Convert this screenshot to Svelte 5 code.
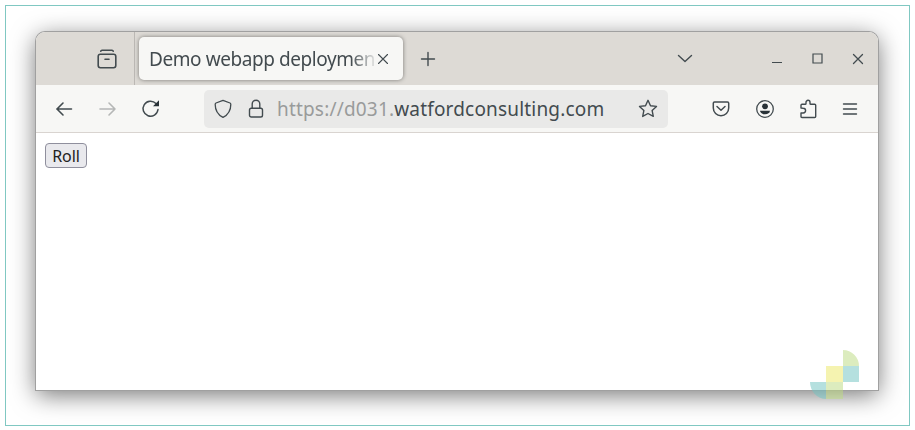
<script>
  const url = { prefix: 'https://d031.', domain: 'watfordconsulting.com' };
</script>

<main class="frame">
  <section class="window">
    <header class="tabs">
      <div class="history">
        <svg width="20" height="20" viewBox="0 0 20 20"><path d="M3.700 2.200Q4 1.200 5 1.200h10q1 0 1.300 1" stroke-width="1.500"/><rect x="1.200" y="5.200" width="17.600" height="13.600" rx="2.200" stroke-width="1.600"/><path d="M8 10.200h4" stroke-width="1.600"/></svg>
      </div>
      <div class="tab">
        <span class="title">Demo webapp deployment</span>
        <svg class="close-tab" width="12" height="12" viewBox="0 0 12 12"><path d="m1.500 1.500 9 9m0-9-9 9" stroke-width="1.100"/></svg>
      </div>
      <svg class="plus" width="16" height="16" viewBox="0 0 16 16"><path d="M8 1.500v13M1.500 8h13" stroke-width="1.400"/></svg>
      <svg class="chevron" width="16" height="10" viewBox="0 0 16 10"><path d="m1.500 1.500 6.500 6 6.500-6" stroke-width="1.400"/></svg>
      <svg class="minimize" width="12" height="12" viewBox="0 0 12 12"><path d="M1 9.500h10" stroke-width="1.200"/></svg>
      <svg class="maximize" width="11" height="11" viewBox="0 0 11 11"><path d="M1 1h9v9H1z" stroke-width="1.200"/></svg>
      <svg class="close" width="12" height="12" viewBox="0 0 12 12"><path d="m1.500 1.500 9 9m0-9-9 9" stroke-width="1.300"/></svg>
    </header>
    <nav class="toolbar">
      <svg class="back" width="18" height="16" viewBox="0 0 18 16"><path d="M16.500 8H1.800M8 2 2 8l6 6" stroke-width="1.600"/></svg>
      <svg class="forward" width="18" height="16" viewBox="0 0 18 16"><path d="M1 8h15m-6-6 6 6-6 6" stroke-width="1.600"/></svg>
      <svg class="reload" width="19" height="19" viewBox="0 0 19 19"><path d="M17 10.500a7.500 7.500 0 1 1-2-6" stroke-width="1.500"/><path class="solid" d="M18 1.200v6h-6z"/></svg>
      <div class="address">
        <svg width="18" height="20" viewBox="0 0 18 20"><path d="m9 1.300 7 2.700q.8.400.8 1.400c0 6-2.200 10-7.800 13C3.400 15.400 1.200 11.400 1.200 5.400q0-1 .8-1.400z" stroke-width="1.300"/></svg>
        <svg class="lock" width="16" height="20" viewBox="0 0 16 20"><rect x="1.500" y="9.200" width="13" height="8.800" rx="1.800" stroke-width="1.400"/><path d="M4.200 9V5a3.800 3.800 0 0 1 7.600 0v4" stroke-width="1.400"/></svg>
        <span class="url"><span>{url.prefix}</span>{url.domain}</span>
        <svg class="star" width="20" height="20" viewBox="0 0 20 20"><path d="m10 1.300 2.500 5.400 6 .7-4.400 4 1.200 6-5.300-2.900-5.300 2.900 1.200-6-4.400-4 6-.7z" stroke-width="1.400"/></svg>
      </div>
      <svg class="pocket" width="18" height="16" viewBox="0 0 18 16"><path d="M2.500 1h13q1.200 0 1.200 1.300V7A7.700 7.700 0 0 1 1.300 7V2.300Q1.300 1 2.500 1Z" stroke-width="1.500"/><path d="m5 5.500 4 3.700 4-3.700" stroke-width="1.500"/></svg>
      <svg class="account" width="20" height="20" viewBox="0 0 20 20"><circle cx="10" cy="10" r="8.300" stroke-width="1.300"/><circle class="solid" cx="10" cy="7.300" r="2.900"/><path class="solid" d="M5 11.800h10q-.5 3.400-5 3.400t-5-3.400"/></svg>
      <svg class="extension" width="18" height="20" viewBox="0 0 18 20"><path d="M2 9V6.300Q2 5.300 3 5.300h3.200q.8 0 .8-.8V3.300a2 2 0 0 1 4 0v1.200q0 .8.800.8h3.900q1 0 1 1v11.200q0 1-1 1H3q-1 0-1-1V14h2.200a2.400 2.400 0 0 0 0-4.800z" stroke-width="1.400"/></svg>
      <svg class="menu" width="16" height="12" viewBox="0 0 16 12"><path d="M1.500 1h13M1.500 6h13M1.500 11h13" stroke-width="1.400"/></svg>
    </nav>
    <div class="page"><button>Roll</button></div>
  </section>
  <svg class="logo" width="49" height="49" viewBox="0 0 49 49"><path fill="#bedb83" d="M33 0a16 16 0 0 1 16 16H33zM16 32h17v17H16z"/><path fill="#ece969" d="M16 16h17v16H16z"/><path fill="#73c4c2" d="M33 16h16v16H33zM0 32h16v17A16 17 0 0 1 0 32z"/></svg>
</main>

<style>
  :global(body) { margin: 0; background: #fff; }
  * { box-sizing: border-box; }
  .frame {
    position: relative;
    width: 905px;
    height: 421px;
    margin: 5px 0 0 5px;
    border: 1px solid #80c8c2;
    padding: 26px 30px;
    font-family: "Noto Sans", sans-serif;
    color: #434b4f;
  }
  .window {
    width: 842px;
    height: 358px;
    overflow: hidden;
    border-radius: 9px 9px 0 0;
    background: white;
    box-shadow: 0 0 0 1px #a0a0a0, 0 5px 24px rgba(0, 0, 0, .55);
  }
  svg { display: block; flex: none; fill: none; stroke: #424b4f; stroke-linecap: round; stroke-linejoin: round; }
  .solid { fill: #293237; stroke: none; }
  .tabs { display: flex; align-items: center; height: 53px; background: #dddad5; }
  .history { display: flex; align-items: center; width: 99px; height: 53px; padding-left: 61px; border-right: 1px solid #bbb8b4; }
  .tab { display: flex; align-items: center; width: 264px; height: 43px; margin-left: 4px; padding-left: 10px; border-radius: 5px; background: #f7f7f5; box-shadow: 0 0 4px rgba(0, 0, 0, .45); }
  .title { width: 225px; overflow: hidden; white-space: nowrap; font-size: 19px; line-height: 28px; letter-spacing: -.43px; mask-image: linear-gradient(to right, black 202px, transparent 229px); }
  .close-tab { margin-left: 3px; }
  .plus { margin-left: 17px; }
  .chevron { margin-left: 241px; }
  .minimize { margin-left: 78px; }
  .maximize { margin-left: 29px; }
  .close { margin-left: 29px; }
  .minimize, .maximize { stroke-linecap: butt; stroke-linejoin: miter; }
  .toolbar { display: flex; align-items: center; height: 48px; background: #f7f7f5; border-bottom: 1px solid #d9d4d0; }
  .back { margin-left: 19px; }
  .forward { margin-left: 26px; stroke: #b5b7b6; }
  .reload { margin-left: 24px; }
  .address { display: flex; align-items: center; width: 464px; height: 38px; margin-left: 44px; padding-left: 10px; border-radius: 5px; background: #e9e9e8; }
  .lock { margin-left: 16px; }
  .url { width: 340px; margin-left: 13px; white-space: nowrap; font-size: 19px; line-height: 28px; letter-spacing: .18px; }
  .url span { color: #999b9b; }
  .star { margin-left: 21px; }
  .pocket { margin-left: 44px; }
  .account { margin-left: 25px; }
  .extension { margin-left: 24px; }
  .menu { margin-left: 25px; }
  .page { padding: 10px 9px; }
  button { display: block; width: 42px; height: 25px; padding: 0; border: 1px solid #8f8f9d; border-radius: 4px; background: #e9e9ed; color: #222; font: 16px/22px "Noto Sans", sans-serif; letter-spacing: -.1px; }
  .logo { position: absolute; left: 804px; top: 344px; stroke: none; opacity: .52; }
</style>
